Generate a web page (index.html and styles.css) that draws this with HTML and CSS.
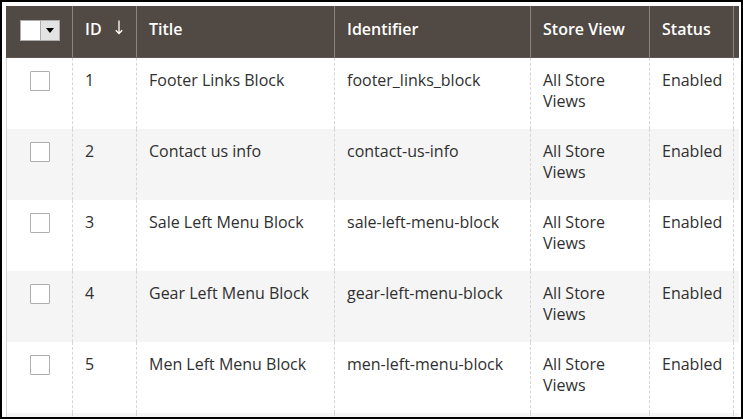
FILE: index.html
```html
<!DOCTYPE html>
<html>
<head>
<meta charset="utf-8">
<link rel="stylesheet" href="styles.css">
</head>
<body>
<div class="frame">
  <div class="clip">
    <table class="grid">
      <colgroup>
        <col class="c-check"><col class="c-id"><col class="c-title"><col class="c-ident"><col class="c-store"><col class="c-status"><col class="c-more">
      </colgroup>
      <thead>
        <tr>
          <th class="th-check">
            <div class="mass">
              <span class="mass-box"></span>
              <span class="mass-toggle"><span class="tri"></span></span>
            </div>
          </th>
          <th><span class="th-id">ID <svg class="sort" width="8" height="15" viewBox="0 0 8 15"><path d="M4 0.5V13.5M0.8 10.3L4 13.5L7.2 10.3" fill="none" stroke="#fff" stroke-width="1.3"/></svg></span></th>
          <th>Title</th>
          <th>Identifier</th>
          <th>Store View</th>
          <th>Status</th>
          <th></th>
        </tr>
      </thead>
      <tbody>
        <tr>
          <td class="td-check"><span class="cb"></span></td>
          <td>1</td><td>Footer Links Block</td><td>footer_links_block</td><td>All Store Views</td><td>Enabled</td><td></td>
        </tr>
        <tr class="alt">
          <td class="td-check"><span class="cb"></span></td>
          <td>2</td><td>Contact us info</td><td>contact-us-info</td><td>All Store Views</td><td>Enabled</td><td></td>
        </tr>
        <tr>
          <td class="td-check"><span class="cb"></span></td>
          <td>3</td><td>Sale Left Menu Block</td><td>sale-left-menu-block</td><td>All Store Views</td><td>Enabled</td><td></td>
        </tr>
        <tr class="alt">
          <td class="td-check"><span class="cb"></span></td>
          <td>4</td><td>Gear Left Menu Block</td><td>gear-left-menu-block</td><td>All Store Views</td><td>Enabled</td><td></td>
        </tr>
        <tr>
          <td class="td-check"><span class="cb"></span></td>
          <td>5</td><td>Men Left Menu Block</td><td>men-left-menu-block</td><td>All Store Views</td><td>Enabled</td><td></td>
        </tr>
        <tr class="alt">
          <td class="td-check"></td>
          <td></td><td></td><td></td><td></td><td></td><td></td>
        </tr>
      </tbody>
    </table>
  </div>
</div>
</body>
</html>
```
FILE: styles.css
```css
html, body {
  margin: 0;
  padding: 0;
  background: #fff;
}
.frame {
  width: 743px;
  height: 419px;
  box-sizing: border-box;
  border: 2px solid #000;
  padding: 4px 2px 0 4px;
  background: #fff;
  overflow: hidden;
}
.clip {
  width: 100%;
  height: 100%;
  overflow: hidden;
}
.grid {
  border-collapse: separate;
  border-spacing: 0;
  table-layout: fixed;
  width: 827px;
  font-family: "Open Sans", "DejaVu Sans", sans-serif;
  font-size: 16px;
  line-height: 21px;
  color: #303030;
}
.c-check { width: 66px; }
.c-id { width: 64px; }
.c-title { width: 198px; }
.c-ident { width: 196px; }
.c-store { width: 119px; }
.c-status { width: 84px; }
.c-more { width: 100px; }

.grid th {
  background: #514943;
  color: #fff;
  font-weight: 600;
  text-align: left;
  height: 52px;
  box-sizing: border-box;
  padding: 0 12px 5px;
  border-left: 1px solid #8a837f;
  vertical-align: middle;
  white-space: nowrap;
  border-bottom: 1px solid #5f5853;
}
.grid th.th-check {
  border-left-color: #514943;
  padding: 0 0 3px 13px;
}
.th-id {
  display: inline-flex;
  align-items: center;
  gap: 13px;
}
.sort {
  display: block;
  margin-top: -4px;
}
.mass {
  display: flex;
  width: 40px;
  height: 21px;
  border: 1px solid #adadad;
  box-sizing: border-box;
}
.mass-box {
  width: 19px;
  background: #fff;
}
.mass-toggle {
  flex: 1;
  background: #e3e3e3;
  border-left: 1px solid #adadad;
  display: flex;
  align-items: center;
  justify-content: center;
}
.tri {
  width: 0;
  height: 0;
  border-left: 4px solid transparent;
  border-right: 4px solid transparent;
  border-top: 5px solid #000;
}

.grid td {
  height: 71px;
  box-sizing: border-box;
  padding: 12px 12px 0;
  vertical-align: top;
  border-left: 1px dashed #d6d6d6;
}
.grid td.td-check {
  border-left: 1px solid #d6d6d6;
  padding: 13px 0 0 23px;
}
.grid tr.alt td {
  background: #f5f5f5;
}
.cb {
  display: block;
  width: 20px;
  height: 20px;
  box-sizing: border-box;
  border: 1px solid #adadad;
  border-radius: 1px;
  background: #fff;
}
```
